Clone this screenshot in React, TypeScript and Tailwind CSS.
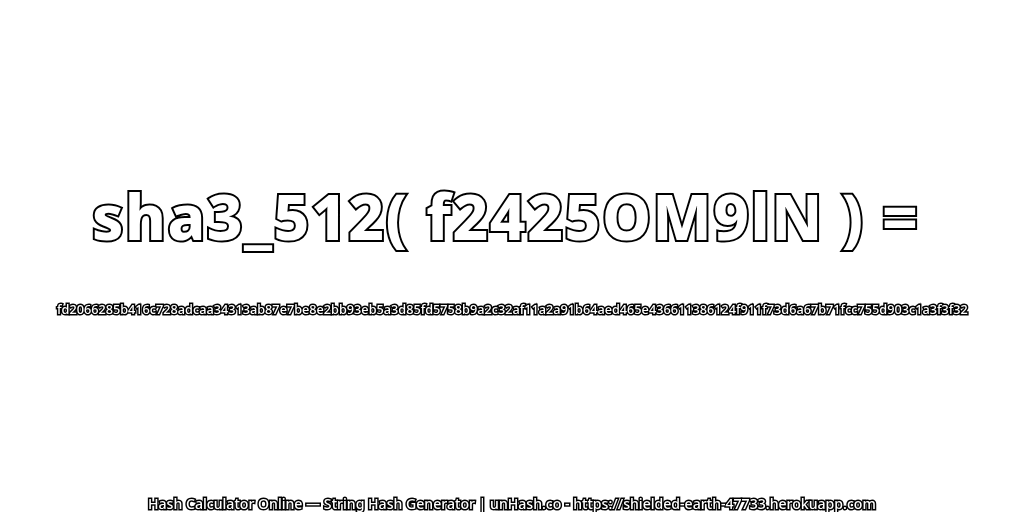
export default function App() {
  return (
    <div className="flex flex-col items-center h-[512px] w-[1024px] bg-white text-white font-['Noto_Sans',sans-serif]">
      {/* heading */}
      <h1 className="mt-[168px] pr-[13px] h-[96px] leading-[96px] text-[62px] font-extrabold tracking-[1.5px] whitespace-nowrap [will-change:transform] [-webkit-text-stroke:4px_#000] [paint-order:stroke_fill]">
        sha3_512( f2425OM9lN ) =
      </h1>
      <p className="mt-[37px] h-[16px] leading-[16px] text-[12.7px] font-medium whitespace-nowrap [will-change:transform] [-webkit-text-stroke:3px_#000] [paint-order:stroke_fill]">
        fd2066285b416c728adcaa34313ab87e7be8e2bb93eb5a3d85fd5758b9a2c32af11a2a91b64aed465e436611386124f911f73d6a67b71fcc755d903c1a3f3f32
      </p>
      <p className="mt-auto h-[16px] leading-[16px] text-[14.1px] font-medium whitespace-nowrap [will-change:transform] [-webkit-text-stroke:3px_#000] [paint-order:stroke_fill]">
        Hash Calculator Online — String Hash Generator | unHash.co - https://shielded-earth-47733.herokuapp.com
      </p>
    </div>
  );
}
